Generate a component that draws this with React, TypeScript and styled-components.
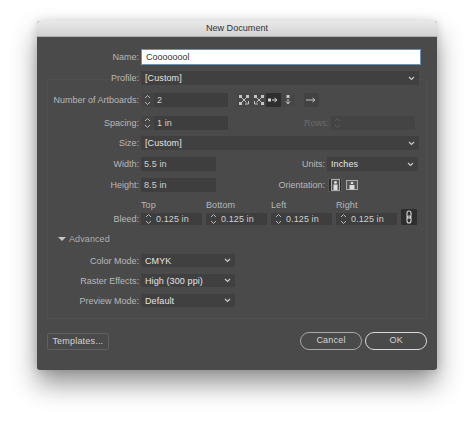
import React from 'react';
import styled, { createGlobalStyle } from 'styled-components';

const Global = createGlobalStyle`
  html, body { margin: 0; background: #fff; }
  body { font-family: "Liberation Sans", Arial, sans-serif; }
`;

const Page = styled.div`
  width: 474px;
  height: 423px;
  padding: 21px 0 0 37px;
  box-sizing: border-box;
  overflow: hidden;
`;

const Dialog = styled.div`
  width: 400px;
  height: 349px;
  background: #4a4a4a;
  border-radius: 3px;
  box-shadow: 0 14px 26px rgba(0, 0, 0, 0.42), 0 0 10px rgba(0, 0, 0, 0.14);
  display: flex;
  flex-direction: column;
  overflow: hidden;
`;

const TitleBar = styled.div`
  height: 15px;
  background: linear-gradient(#e9e9e9, #d2d2d2);
  border-bottom: 1px solid #b0b0b0;
  font-size: 9.1px;
  line-height: 15px;
  text-align: center;
  color: #333;
`;

const Body = styled.div`
  flex: 1;
  padding: 13px 10px 0;
  display: flex;
  flex-direction: column;
`;

const Row = styled.div<{ $top?: number }>`
  display: flex;
  align-items: center;
  margin-top: ${(p) => p.$top ?? 0}px;
`;

const Label = styled.label<{ $width?: number; $dim?: boolean }>`
  width: ${(p) => p.$width ?? 91}px;
  flex: none;
  text-align: right;
  font-size: 9px;
  color: ${(p) => (p.$dim ? '#6a6a6a' : '#b8b8b8')};
  margin-right: 2px;
  white-space: nowrap;
`;

const NameInput = styled.div`
  width: 278px;
  height: 14px;
  margin-left: 1px;
  background: #fff;
  box-shadow: 0 0 0 1px #6b93b5;
  font-size: 9px;
  line-height: 14px;
  padding-left: 4px;
  box-sizing: border-box;
  color: #333;
`;

const Group = styled.div`
  margin-top: 15px;
  height: 240px;
  box-sizing: border-box;
  border: 1px solid #4f4f4f;
  padding-right: 7px;
`;

const SelectBox = styled.div<{ $width: number; $height?: number }>`
  width: ${(p) => p.$width}px;
  height: ${(p) => p.$height ?? 14}px;
  background: #404040;
  display: flex;
  align-items: center;
  justify-content: space-between;
  padding: 0 4px 0 4px;
  box-sizing: border-box;
  font-size: 9px;
  letter-spacing: 0.1px;
  color: #e4e4e4;
`;

const FieldText = styled.div<{ $width: number; $height?: number; $dim?: boolean }>`
  width: ${(p) => p.$width}px;
  height: ${(p) => p.$height ?? 14}px;
  background: ${(p) => (p.$dim ? '#444' : '#3e3e3e')};
  font-size: 9px;
  letter-spacing: 0.1px;
  line-height: ${(p) => p.$height ?? 14}px;
  padding-left: 3px;
  box-sizing: border-box;
  color: #d0d0d0;
`;

const SpinWrap = styled.div`
  display: flex;
  align-items: center;
  width: 13px;
  height: 14px;
  flex: none;
  justify-content: center;
  background: #444;
`;

const BleedSpin = styled(SpinWrap)`
  background: #3e3e3e;
  width: 15px;
  height: 12px;
`;

const IconGroup = styled.div`
  display: flex;
  margin-left: 9px;
  height: 14px;
`;

const ArrangeBtn = styled.div<{ $active?: boolean }>`
  width: 14.5px;
  height: 14px;
  display: flex;
  align-items: center;
  justify-content: center;
  background: ${(p) => (p.$active ? '#2e2e2e' : '#464646')};
`;

const DirBtn = styled(ArrangeBtn)`
  margin-left: 9px;
  background: #424242;
`;

const SideControls = styled.div<{ $left: number }>`
  margin-left: ${(p) => p.$left}px;
  display: flex;
  align-items: center;
`;

const OrientBtn = styled.div<{ $active?: boolean }>`
  width: 14px;
  height: 14px;
  margin-right: 3px;
  display: flex;
  align-items: center;
  justify-content: center;
  box-sizing: border-box;
  background: ${(p) => (p.$active ? '#2e2e2e' : '#4a4a4a')};
  border: 1px solid ${(p) => (p.$active ? '#555' : '#4a4a4a')};
`;

const BleedRow = styled.div`
  display: flex;
  align-items: flex-end;
  margin-top: 8px;
`;

const BleedLabel = styled(Label)`
  line-height: 12px;
`;

const BleedCol = styled.div<{ $gap?: number }>`
  width: 61px;
  margin-right: ${(p) => p.$gap ?? 4}px;
  display: flex;
  flex-direction: column;
  gap: 2px;
  font-size: 9px;
  letter-spacing: 0.1px;
  line-height: 11px;
  color: #b8b8b8;
`;

const BleedField = styled.div`
  display: flex;
  background: #3e3e3e;
  font-size: 9px;
  line-height: 12px;
  color: #d0d0d0;
`;

const LinkBtn = styled.div`
  width: 16px;
  height: 16px;
  background: #2e2e2e;
  display: flex;
  align-items: center;
  justify-content: center;
  border-radius: 1px;
`;

const AdvancedRow = styled.div`
  display: flex;
  align-items: center;
  margin: 8px 0 0 10px;
  font-size: 9px;
  letter-spacing: 0.1px;
  line-height: 12px;
  color: #aeaeae;
  gap: 3px;
`;

const Caret = styled.div`
  width: 0;
  height: 0;
  border-left: 4px solid transparent;
  border-right: 4px solid transparent;
  border-top: 4px solid #c4c4c4;
`;

const Footer = styled.div`
  display: flex;
  align-items: center;
  margin-top: 13px;
`;

const SquareButton = styled.div`
  width: 62px;
  height: 17px;
  box-sizing: border-box;
  border: 1px solid #5f5f5f;
  border-radius: 2px;
  text-align: center;
  line-height: 15px;
  font-size: 9px;
  letter-spacing: 0.2px;
  color: #d4d4d4;
`;

const PillButton = styled.div<{ $primary?: boolean }>`
  width: 62px;
  height: 18px;
  box-sizing: border-box;
  margin-left: ${(p) => (p.$primary ? 3.5 : 191.5)}px;
  border: ${(p) => (p.$primary ? '1.5px solid #d8d8d8' : '1px solid #a8a8a8')};
  border-radius: 9px;
  text-align: center;
  line-height: 15.5px;
  font-size: 9px;
  letter-spacing: 0.2px;
  color: #d4d4d4;
`;

const Chevron = () => (
  <svg width="7" height="5" viewBox="0 0 7 5">
    <path d="M1 1l2.5 2.5L6 1" fill="none" stroke="#c8c8c8" strokeWidth="1.2" />
  </svg>
);

const Spinner = ({ dim }: { dim?: boolean }) => (
  <svg width="7" height="12" viewBox="0 0 7 12">
    <path d="M1 4l2.5-2.5L6 4M1 8l2.5 2.5L6 8" fill="none" stroke={dim ? '#5c5c5c' : '#b8b8b8'} strokeWidth="1" />
  </svg>
);

const GridIcon = ({ flip }: { flip?: boolean }) => (
  <svg width="10" height="10" viewBox="0 0 10 10" style={flip ? { transform: 'scaleX(-1)' } : undefined}>
    <g fill="#c4c4c4">
      <rect x="0" y="0" width="3" height="3" />
      <rect x="7" y="0" width="3" height="3" />
      <rect x="0" y="7" width="3" height="3" />
    </g>
    <path d="M2 2l5.5 5.5M8 2L2 8M6 9h3.5V6" stroke="#c4c4c4" strokeWidth="1" fill="none" />
  </svg>
);

const RowIcon = () => (
  <svg width="10" height="8" viewBox="0 0 10 8">
    <rect x="0" y="2.5" width="3" height="3" fill="#d8d8d8" />
    <path d="M4 4h4M6.5 2L9 4 6.5 6" stroke="#d8d8d8" fill="none" />
  </svg>
);

const ColIcon = () => (
  <svg width="8" height="10" viewBox="0 0 8 10">
    <rect x="2.5" y="0" width="3" height="3" fill="#c4c4c4" />
    <path d="M4 4v4M2 6.5L4 9l2-2.5" stroke="#c4c4c4" fill="none" />
  </svg>
);

const ArrowIcon = () => (
  <svg width="10" height="6" viewBox="0 0 10 6">
    <path d="M0 3h8M6.5 1L9 3 6.5 5" stroke="#c4c4c4" fill="none" />
  </svg>
);

const PortraitIcon = () => (
  <svg width="9" height="12" viewBox="0 0 9 12">
    <rect x="0.5" y="0.5" width="8" height="11" fill="#555" stroke="#aaa" />
    <circle cx="4.5" cy="3.4" r="1.4" fill="#ddd" />
    <rect x="2.5" y="5.5" width="4" height="5.5" fill="#ddd" />
  </svg>
);

const LandscapeIcon = () => (
  <svg width="12" height="10" viewBox="0 0 12 10">
    <rect x="0.5" y="0.5" width="11" height="9" fill="#555" stroke="#aaa" />
    <circle cx="6" cy="3" r="1.3" fill="#ddd" />
    <rect x="3.5" y="5" width="5" height="4.5" fill="#ddd" />
  </svg>
);

const ChainIcon = () => (
  <svg width="8" height="14" viewBox="0 0 8 14">
    <path
      d="M2 6V3a2 2 0 0 1 4 0v3a2 2 0 0 1-4 0M6 8v3a2 2 0 0 1-4 0V8a2 2 0 0 1 4 0"
      fill="none"
      stroke="#d8d8d8"
      strokeWidth="1.1"
    />
  </svg>
);

const bleeds = [
  { name: 'Top', value: '0.125 in' },
  { name: 'Bottom', value: '0.125 in' },
  { name: 'Left', value: '0.125 in' },
  { name: 'Right', value: '0.125 in' },
];

const App: React.FC = () => {
  return (
    <Page>
      <Global />
      <Dialog>
        <TitleBar>New Document</TitleBar>
        <Body>
          <Row>
            <Label $width={92}>Name:</Label>
            <NameInput>Coooooool</NameInput>
          </Row>
          <Group>
            <Row $top={-9}>
              <Label>Profile:</Label>
              <SelectBox $width={279}>
                [Custom]
                <Chevron />
              </SelectBox>
            </Row>
            <Row $top={8}>
              <Label>Number of Artboards:</Label>
              <SpinWrap>
                <Spinner />
              </SpinWrap>
              <FieldText $width={74}>2</FieldText>
              <IconGroup>
                <ArrangeBtn>
                  <GridIcon />
                </ArrangeBtn>
                <ArrangeBtn>
                  <GridIcon flip />
                </ArrangeBtn>
                <ArrangeBtn $active>
                  <RowIcon />
                </ArrangeBtn>
                <ArrangeBtn>
                  <ColIcon />
                </ArrangeBtn>
                <DirBtn>
                  <ArrowIcon />
                </DirBtn>
              </IconGroup>
            </Row>
            <Row $top={9}>
              <Label>Spacing:</Label>
              <SpinWrap>
                <Spinner />
              </SpinWrap>
              <FieldText $width={74}>1 in</FieldText>
              <Label $width={101} $dim>
                Rows:
              </Label>
              <SpinWrap>
                <Spinner dim />
              </SpinWrap>
              <FieldText $width={71} $dim />
            </Row>
            <Row $top={6}>
              <Label>Size:</Label>
              <SelectBox $width={279}>
                [Custom]
                <Chevron />
              </SelectBox>
            </Row>
            <Row $top={7}>
              <Label>Width:</Label>
              <FieldText $width={75}>5.5 in</FieldText>
              <Label $width={109}>Units:</Label>
              <SelectBox $width={91}>
                Inches
                <Chevron />
              </SelectBox>
            </Row>
            <Row $top={7}>
              <Label>Height:</Label>
              <FieldText $width={75}>8.5 in</FieldText>
              <Label $width={109}>Orientation:</Label>
              <SideControls $left={1}>
                <OrientBtn $active>
                  <PortraitIcon />
                </OrientBtn>
                <OrientBtn>
                  <LandscapeIcon />
                </OrientBtn>
              </SideControls>
            </Row>
            <BleedRow>
              <BleedLabel>Bleed:</BleedLabel>
              {bleeds.map((b) => (
                <BleedCol key={b.name}>
                  {b.name}
                  <BleedField>
                    <BleedSpin>
                      <Spinner />
                    </BleedSpin>
                    {b.value}
                  </BleedField>
                </BleedCol>
              ))}
              <LinkBtn>
                <ChainIcon />
              </LinkBtn>
            </BleedRow>
            <AdvancedRow>
              <Caret />
              Advanced
            </AdvancedRow>
            <Row $top={9}>
              <Label>Color Mode:</Label>
              <SelectBox $width={94} $height={13}>
                CMYK
                <Chevron />
              </SelectBox>
            </Row>
            <Row $top={7}>
              <Label>Raster Effects:</Label>
              <SelectBox $width={94} $height={13}>
                High (300 ppi)
                <Chevron />
              </SelectBox>
            </Row>
            <Row $top={7}>
              <Label>Preview Mode:</Label>
              <SelectBox $width={94} $height={13}>
                Default
                <Chevron />
              </SelectBox>
            </Row>
          </Group>
          <Footer>
            <SquareButton>Templates...</SquareButton>
            <PillButton>Cancel</PillButton>
            <PillButton $primary>OK</PillButton>
          </Footer>
        </Body>
      </Dialog>
    </Page>
  );
};

export default App;
